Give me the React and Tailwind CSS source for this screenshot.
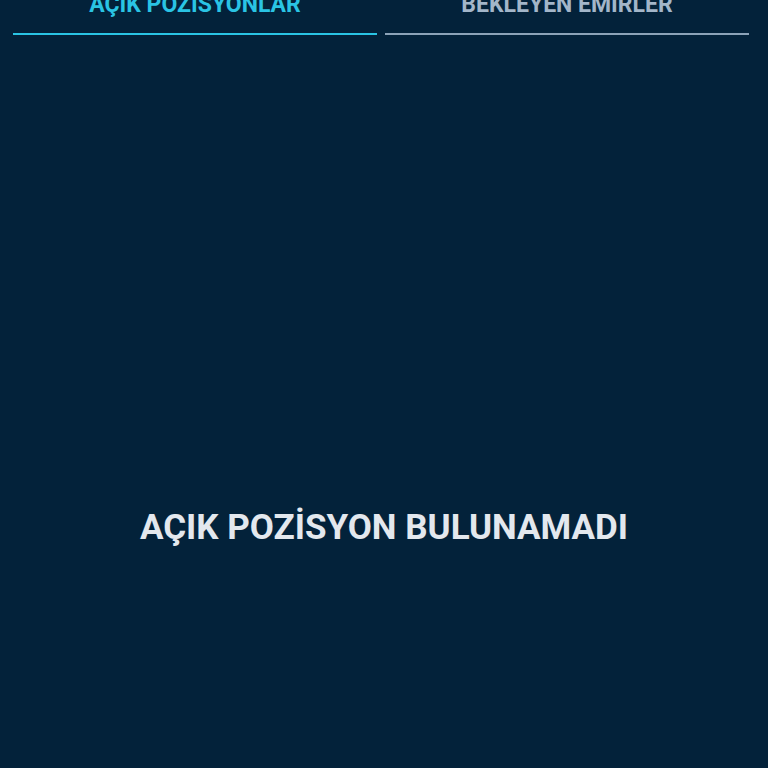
import React from 'react'

const tabs = [
  { label: 'AÇIK POZİSYONLAR', active: true },
  { label: 'BEKLEYEN EMİRLER', active: false },
]

export default function App() {
  return (
    <div className="h-[768px] w-[768px] overflow-hidden bg-[#03223a] font-['Roboto',sans-serif]">
      {/* Tabs */}
      <div className="flex gap-2 pl-[13px] pr-[19px]">
        {tabs.map((tab) => (
          <div key={tab.label} className="flex flex-1 flex-col items-center">
            <div
              className={`-mt-[7px] h-[23px] whitespace-nowrap text-[23px] font-bold leading-[23px] ${
                tab.active ? 'text-[#2ac4e4]' : 'text-[#a3b6c9]'
              }`}
            >
              {tab.label}
            </div>
            <div
              className={`mt-[17px] h-[2px] w-full ${
                tab.active ? 'bg-[#2ac4e4]' : 'bg-[#8ca3b8]'
              }`}
            />
          </div>
        ))}
      </div>

      {/* Empty state */}
      <div className="mt-[473px] flex justify-center">
        <span className="whitespace-nowrap text-[35px] font-bold leading-[40px] text-[#e3e8ee]">
          AÇIK POZİSYON BULUNAMADI
        </span>
      </div>
    </div>
  )
}
